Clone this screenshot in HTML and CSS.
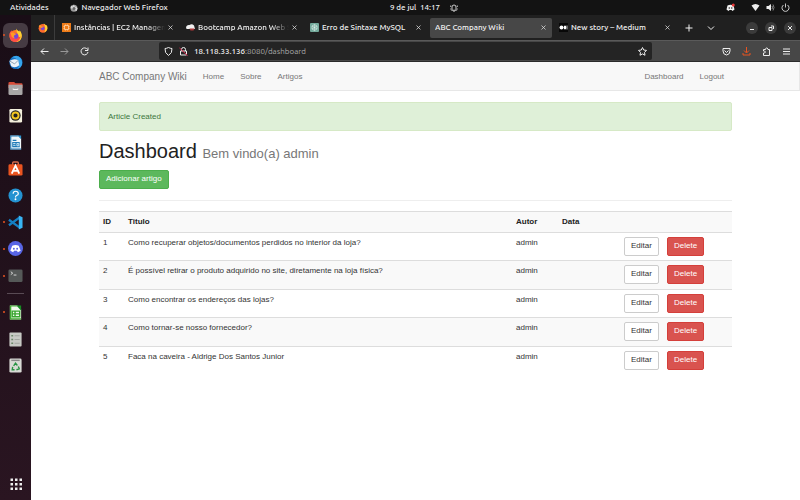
FILE: index.html
```html
<!DOCTYPE html>
<html lang="pt-BR">
<head>
<meta charset="utf-8">
<meta name="viewport" content="width=device-width, initial-scale=1">
<title>ABC Company Wiki</title>
<link rel="stylesheet" href="styles.css">
</head>
<body>
<header class="topbar">
  <div class="top-left">
    <button class="plain" type="button">Atividades</button>
    <button class="plain app-name" type="button">
      <svg class="i8" viewBox="0 0 16 16"><circle cx="8" cy="8.500" r="7" fill="#999"/><path d="M1 8 2 3l3 2 3-4 1 4 4 1 2 3-2 5z" fill="#d8d8d8"/><circle cx="8" cy="9" r="3" fill="#666"/></svg>
      Navegador Web Firefox
    </button>
  </div>
  <button class="plain clock" type="button">9 de jul&nbsp; 14:17
    <svg class="i8 bell" viewBox="0 0 16 16" fill="none" stroke="#ddd" stroke-width="1.800"><path d="M4 11V6a4 4 0 0 1 8 0v5l1 1.500H3zM6.500 14.500h3M1.500 3v3M14.500 3v3M1.500 9v2M14.500 9v2"/></svg>
  </button>
  <div class="top-right">
    <svg class="i9 discord-tray" viewBox="0 0 18 18"><path d="M3 5q6-3 12 0l2 8-4 3-2-2H7l-2 2-4-3z" fill="#f2f2f2"/><circle cx="6.500" cy="10" r="1.500" fill="#222"/><circle cx="11.500" cy="10" r="1.500" fill="#222"/><circle cx="14.500" cy="4" r="3" fill="#ed3a3a"/></svg>
    <svg class="i9" viewBox="0 0 18 18"><path d="M1 5q8-6 16 0L9 16z" fill="#eee"/></svg>
    <svg class="i9" viewBox="0 0 18 18"><path d="M1 6h4l5-4v14l-5-4H1z" fill="#eee"/><path d="M12 6q2 3 0 6M14 3q4 6 0 12" fill="none" stroke="#aaa" stroke-width="1.500"/></svg>
    <svg class="i9" viewBox="0 0 18 18" fill="none" stroke="#ddd" stroke-width="1.800"><path d="M5 4a7 7 0 1 0 8 0M9 1v8"/></svg>
  </div>
</header>
<div class="desktop">
  <nav class="dock" aria-label="Dock">
    <ul class="dock-list">
      <li class="running"><span class="tile"><svg viewBox="0 0 32 32"><circle cx="16" cy="17" r="13" fill="#ff7a24"/><path d="M17 1q3 5 7 7l1-3q6 8 4 15-3 9-12 10 9-7 5-15-3-4-5-14" fill="#ffd232"/><path d="M3 12 7 5l3 5q6-1 8 2l-4 3q8 7 13 3-3 11-11 12Q2 29 3 12" fill="#ff4d47"/><circle cx="16" cy="17" r="6" fill="#7647d8"/><path d="M5 10q5-2 9 1l4 2-5 3q-2 4 3 6-8 0-9-6z" fill="#ff9b24"/></svg></span></li>
      <li><svg viewBox="0 0 32 32"><circle cx="17" cy="16" r="14" fill="#1671c4"/><path d="M8 5Q20-3 28 8q7 17-9 22 9-10 2-19-5-6-13-6" fill="#36a5ed"/><path d="M3 13q10-7 19-2l2 11q-8 7-17 2z" fill="#edf3f7"/><path d="m4 13 10 6 8-8" fill="none" stroke="#899eae" stroke-width="2"/></svg></li>
      <li><svg viewBox="0 0 32 32"><path d="M1 4q0-2 2-2h10l3 3h13q2 0 2 3v7H1z" fill="#d74c38"/><path d="M1 8h30v19q0 3-3 3H4q-3 0-3-3z" fill="#a9a7a7"/><path d="M11 16v2h10v-2" fill="none" stroke="#fff" stroke-width="2"/></svg></li>
      <li><svg viewBox="0 0 32 32"><rect x="3" y="2" width="27" height="29" rx="3" fill="#f3efdc"/><circle cx="16" cy="16" r="11" fill="#242424"/><circle cx="16" cy="16" r="6.500" fill="none" stroke="#f4c720" stroke-width="4"/><circle cx="16" cy="16" r="3" fill="#222"/></svg></li>
      <li><svg viewBox="0 0 32 32"><path d="M5 1h17l6 7v23H5z" fill="#f0f7fa"/><path d="M20 1h8v8z" fill="#2e94cd"/><path d="M5 1h16v2H7v26h21v2H5zM10 10h8v3h-8zM9 15h16v11H9z" fill="#1b78b7"/><path d="M11 18h5m-5 4h5m3-4h4v5h-4z" stroke="#d5edf8" stroke-width="2" fill="none"/></svg></li>
      <li><svg viewBox="0 0 32 32"><path d="M10 9V4q0-2 2-2h8q2 0 2 2v5" fill="none" stroke="#d86b49" stroke-width="3"/><rect x="1" y="7" width="30" height="24" rx="3" fill="#e95420"/><path d="m8 27 8-17 8 17M9 21h14" fill="none" stroke="#fff" stroke-width="4"/></svg></li>
      <li><svg viewBox="0 0 32 32"><circle cx="16" cy="16" r="15" fill="#2493d1"/><path d="M11 12q0-5 5-5 6 0 6 5 0 3-4 4-2 1-2 4" fill="none" stroke="#fff" stroke-width="2.500"/><circle cx="16" cy="24" r="2" fill="#fff"/></svg></li>
      <li class="running"><svg viewBox="0 0 32 32"><path d="M25 5 2 22M25 27 2 10" fill="none" stroke="#147fc3" stroke-width="5"/><path d="m23 1 8 4v22l-8 4z" fill="#38b5f4"/></svg></li>
      <li class="running"><svg viewBox="0 0 32 32"><circle cx="16" cy="16" r="16" fill="#5865e5"/><path d="M9 10q7-3 14 0l4 11-6 3-2-3h-6l-2 3-6-3z" fill="#fff"/><circle cx="12.500" cy="16.500" r="2" fill="#5865e5"/><circle cx="19.500" cy="16.500" r="2" fill="#5865e5"/></svg></li>
      <li class="running"><svg viewBox="0 0 32 32"><rect x="1" y="3" width="30" height="27" rx="3" fill="#555958"/><path d="m6 8 4 3-4 3m6 1h6" fill="none" stroke="#ddd" stroke-width="2"/></svg></li>
    </ul>
    <hr class="dock-rule">
    <ul class="dock-list dock-short">
      <li class="running"><svg viewBox="0 0 32 32"><path d="M4 1h16l8 9v21H4z" fill="#f1faec"/><path d="M18 1h10v11z" fill="#168c22"/><path d="M4 1h15v2H7v25h21v3H4z" fill="#42ad32"/><path d="M9 13h16v12H9zM9 19h16M15 13v12" fill="none" stroke="#37a52e" stroke-width="3"/></svg></li>
      <li><svg viewBox="0 0 32 32"><rect x="3" y="1" width="26" height="30" rx="2" fill="#c7c9c4"/><path d="M7 8h4m-4 8h4m-4 8h4" stroke="#6c8769" stroke-width="3"/><path d="M14 8h11m-11 8h11m-11 8h11" stroke="#a0a29e" stroke-width="2"/></svg></li>
      <li><svg viewBox="0 0 32 32"><rect x="3" y="1" width="26" height="30" rx="3" fill="#d8dad5"/><path d="M7 5h18" stroke="#888" stroke-width="3"/><path d="m12 17 4-6 4 5m2 2 2 5-6 2m-4 0H9l1-6" fill="none" stroke="#269342" stroke-width="3"/></svg></li>
    </ul>
    <button class="plain apps" type="button" aria-label="Aplicativos"><svg viewBox="0 0 24 24" fill="#eee"><path d="M1 1h5v5H1zm9 0h5v5h-5zm9 0h5v5h-5zM1 10h5v5H1zm9 0h5v5h-5zm9 0h5v5h-5zM1 19h5v5H1zm9 0h5v5h-5zm9 0h5v5h-5z"/></svg></button>
  </nav>
  <section class="browser">
    <div class="tabbar">
      <div class="pinned"><svg class="i10" viewBox="0 0 32 32"><circle cx="16" cy="17" r="14" fill="#ff6a2b"/><path d="M18 1q4 5 11 8 4 15-9 21 7-13-2-29" fill="#ffd232"/><circle cx="15" cy="17" r="6" fill="#7647d8"/><path d="M2 11 7 5l3 5 8 2-6 4z" fill="#ff9b24"/></svg></div>
      <div class="tab"><svg class="i9" viewBox="0 0 18 18"><path d="M0 0h18v18H0z" fill="#ed7b18"/><path d="M5 5h8v8H5zM3 7h2m8 0h2M3 11h2m8 0h2M7 3v2m4-2v2m-4 8v2m4-2v2" fill="none" stroke="#ffe3c1" stroke-width="1.300"/></svg><span class="tab-title fade">Instâncias | EC2 Management</span><button class="plain close" type="button" aria-label="Fechar aba"><svg viewBox="0 0 10 10"><path d="m1 1 8 8m0-8-8 8"/></svg></button></div>
      <div class="tab"><svg class="i9" viewBox="0 0 18 18"><path d="M0 8q2-5 7-4 5-3 9 1l2 7H1z" fill="#f1f1f1"/><path d="M7 11h10l-2 4H9z" fill="#ae3638"/></svg><span class="tab-title fade">Bootcamp Amazon Web Services</span><button class="plain close" type="button" aria-label="Fechar aba"><svg viewBox="0 0 10 10"><path d="m1 1 8 8m0-8-8 8"/></svg></button></div>
      <div class="tab"><svg class="i9" viewBox="0 0 18 18"><rect width="18" height="18" rx="2" fill="#74aa9c"/><path d="m9 3 5 3v6l-5 3-5-3V6zM4 6l10 6M14 6 4 12M9 3v12" fill="none" stroke="#e1f0eb" stroke-width="1.200"/></svg><span class="tab-title">Erro de Sintaxe MySQL</span><button class="plain close" type="button" aria-label="Fechar aba"><svg viewBox="0 0 10 10"><path d="m1 1 8 8m0-8-8 8"/></svg></button></div>
      <div class="tab active"><span class="tab-title">ABC Company Wiki</span><button class="plain close" type="button" aria-label="Fechar aba"><svg viewBox="0 0 10 10"><path d="m1 1 8 8m0-8-8 8"/></svg></button></div>
      <div class="tab"><svg class="i9" viewBox="0 0 18 18"><path d="M0 0h18v18H0z" fill="#080808"/><circle cx="5" cy="9" r="4" fill="#fff"/><ellipse cx="12" cy="9" rx="2.500" ry="4" fill="#fff"/><path d="M16 5v8" stroke="#fff" stroke-width="1.500"/></svg><span class="tab-title">New story – Medium</span><button class="plain close" type="button" aria-label="Fechar aba"><svg viewBox="0 0 10 10"><path d="m1 1 8 8m0-8-8 8"/></svg></button></div>
      <div class="tab-tools">
        <button class="plain" type="button" aria-label="Nova aba"><svg class="i8 line" viewBox="0 0 16 16"><path d="M8 1v14M1 8h14"/></svg></button>
        <button class="plain" type="button" aria-label="Listar abas"><svg class="i8 line" viewBox="0 0 16 16"><path d="m2 5 6 6 6-6"/></svg></button>
      </div>
      <div class="window-tools">
        <button class="round" type="button" aria-label="Minimizar"><svg viewBox="0 0 12 12"><path d="M4 7.500h4"/></svg></button>
        <button class="round" type="button" aria-label="Restaurar"><svg viewBox="0 0 12 12"><path d="M4 5.500h3v3H4zM6 4h2.500v3"/></svg></button>
        <button class="round" type="button" aria-label="Fechar"><svg viewBox="0 0 12 12"><path d="m4 4 4 4m0-4L4 8"/></svg></button>
      </div>
    </div>
    <div class="toolbar">
      <div class="history">
        <button class="plain" type="button" aria-label="Voltar"><svg class="i9 line" viewBox="0 0 18 18"><path d="M17 9H2m6-6L2 9l6 6"/></svg></button>
        <button class="plain dim" type="button" aria-label="Avançar"><svg class="i9 line" viewBox="0 0 18 18"><path d="M1 9h15m-6-6 6 6-6 6"/></svg></button>
        <button class="plain" type="button" aria-label="Recarregar"><svg class="i9 line" viewBox="0 0 18 18"><path d="M15 5a7 7 0 1 0 1 5M16 1v6h-6"/></svg></button>
      </div>
      <div class="address">
        <svg class="i9 line" viewBox="0 0 18 18"><path d="M9 1q4 2 7 2 1 9-7 14Q1 12 2 3q3 0 7-2z"/></svg>
        <svg class="i9 line" viewBox="0 0 18 18"><path d="M3 8h12v8H3zM5 8V5q0-4 4-4t4 4v3"/><path d="m1 2 16 15" stroke="#e22850"/></svg>
        <span class="url"><b>18.118.33.136</b>:8080/dashboard</span>
        <button class="plain" type="button" aria-label="Favoritar"><svg class="i9 line" viewBox="0 0 18 18"><path d="m9 1 2.400 5 5.600.800-4 4 1 5.700-5-2.700-5 2.700 1-5.700-4-4L6.600 6z"/></svg></button>
      </div>
      <div class="extras">
        <button class="plain" type="button" aria-label="Pocket"><svg class="i9 line" viewBox="0 0 18 18"><path d="M2 3h14v5q0 7-7 8-7-1-7-8zM5 7l4 4 4-4"/></svg></button>
        <button class="plain download" type="button" aria-label="Downloads"><svg class="i9 line" viewBox="0 0 18 18"><path d="M9 0v11M4 7l5 5 5-5M2 12v4h14v-4"/></svg></button>
        <button class="plain" type="button" aria-label="Extensões"><svg class="i9 line" viewBox="0 0 18 18"><path d="M3 17v-5h2q4-2 0-4H3V5h4V4q2-5 5 0v1h3v12z"/></svg></button>
        <button class="plain" type="button" aria-label="Menu"><svg class="i9 line" viewBox="0 0 18 18"><path d="M2 4h14M2 9h14M2 14h14"/></svg></button>
      </div>
    </div>
    <div class="page">
      <nav class="navbar">
        <div class="container nav-inner">
          <a class="brand" href="#">ABC Company Wiki</a>
          <a href="#">Home</a><a href="#">Sobre</a><a href="#">Artigos</a>
          <div class="nav-right"><a href="#">Dashboard</a><a href="#">Logout</a></div>
        </div>
      </nav>
      <main class="container">
        <div class="alert" role="status">Article Created</div>
        <h1>Dashboard <small>Bem vindo(a) admin</small></h1>
        <a class="btn success" href="#">Adicionar artigo</a>
        <hr class="rule">
        <table>
          <colgroup><col class="c-id"><col><col class="c-author"><col class="c-date"><col class="c-edit"><col class="c-delete"></colgroup>
          <thead><tr><th>ID</th><th>Titulo</th><th>Autor</th><th>Data</th><th></th><th></th></tr></thead>
          <tbody>
            <tr><td>1</td><td>Como recuperar objetos/documentos perdidos no interior da loja?</td><td>admin</td><td></td><td><a class="btn" href="#">Editar</a></td><td><button class="btn danger" type="button">Delete</button></td></tr>
            <tr><td>2</td><td>É possível retirar o produto adquirido no site, diretamente na loja física?</td><td>admin</td><td></td><td><a class="btn" href="#">Editar</a></td><td><button class="btn danger" type="button">Delete</button></td></tr>
            <tr><td>3</td><td>Como encontrar os endereços das lojas?</td><td>admin</td><td></td><td><a class="btn" href="#">Editar</a></td><td><button class="btn danger" type="button">Delete</button></td></tr>
            <tr><td>4</td><td>Como tornar-se nosso fornecedor?</td><td>admin</td><td></td><td><a class="btn" href="#">Editar</a></td><td><button class="btn danger" type="button">Delete</button></td></tr>
            <tr><td>5</td><td>Faca na caveira - Aldrige Dos Santos Junior</td><td>admin</td><td></td><td><a class="btn" href="#">Editar</a></td><td><button class="btn danger" type="button">Delete</button></td></tr>
          </tbody>
        </table>
      </main>
    </div>
  </section>
</div>
</body>
</html>
```
FILE: styles.css
```css
* { box-sizing: border-box; }
body {
  margin: 0;
  min-height: 100vh;
  display: flex;
  flex-direction: column;
  background: #fff;
  color: #333;
  font: 8px/11px "Liberation Sans", Arial, sans-serif;
}
svg { display: block; flex: none; }
ul { list-style: none; margin: 0; padding: 0; }
a { color: inherit; text-decoration: none; }
.plain {
  display: flex;
  align-items: center;
  padding: 0;
  border: 0;
  background: none;
  color: inherit;
  font: inherit;
}
.i8 { width: 8px; height: 8px; }
.i9 { width: 9px; height: 9px; }
.i10 { width: 10px; height: 10px; }
.line { fill: none; stroke: currentColor; stroke-width: 2; }

.topbar {
  display: grid;
  grid-template-columns: 1fr auto 1fr;
  align-items: center;
  height: 15px;
  padding: 0 10px;
  background: #131313;
  color: #eee;
  font-family: Ubuntu, "Noto Sans", sans-serif;
  font-weight: 500;
}
.top-left { display: flex; gap: 21px; }
.app-name { gap: 4px; }
.clock { margin-left: 48px; }
.bell { margin-left: 10px; }
.top-right { display: flex; justify-content: flex-end; gap: 6px; }
.discord-tray { margin-right: 10px; }

.desktop { flex: 1; display: flex; }
.dock {
  flex: none;
  display: flex;
  flex-direction: column;
  width: 31px;
  padding: 7px 0 10px;
  background: linear-gradient(#190d16, #2a1521);
}
.dock-list { display: flex; flex-direction: column; height: 267px; }
.dock-short { height: 80px; }
.dock-list li {
  flex: 1;
  position: relative;
  display: flex;
  align-items: center;
  justify-content: center;
}
.dock-list svg { width: 15px; height: 15px; }
.running::before {
  content: "";
  position: absolute;
  left: 3px;
  width: 2px;
  height: 2px;
  border-radius: 1px;
  background: #e95420;
}
.tile {
  display: flex;
  align-items: center;
  justify-content: center;
  width: 25px;
  height: 25px;
  border-radius: 6px;
  background: #463b43;
}
.dock-rule { width: 17px; margin: 4px auto 5px; border: 0; border-top: 1px solid #594b54; }
.apps { margin: auto auto 0; }
.apps svg { width: 12px; height: 12px; }

.browser { flex: 1; min-width: 0; display: flex; flex-direction: column; }
.tabbar {
  display: flex;
  align-items: center;
  height: 25px;
  padding-right: 4px;
  background: #202020;
  color: #f2f2f2;
  font-family: Ubuntu, "Noto Sans", sans-serif;
  font-weight: 500;
}
.pinned {
  display: flex;
  align-items: center;
  justify-content: center;
  width: 24px;
  height: 25px;
  border-right: 1px solid #3c3c3c;
}
.tab {
  flex: 0 1 124px;
  min-width: 0;
  display: flex;
  align-items: center;
  gap: 3px;
  height: 20px;
  padding: 0 6px 0 7px;
}
.tab-title { flex: 1; overflow: hidden; white-space: nowrap; }
.fade { -webkit-mask-image: linear-gradient(90deg, #000 80%, transparent); mask-image: linear-gradient(90deg, #000 80%, transparent); }
.close svg { width: 5px; height: 5px; fill: none; stroke: #ddd; stroke-width: 1.5; }
.active {
  margin-left: 3px;
  padding-left: 5px;
  flex-basis: 122px;
  border-radius: 2px;
  background: #474747;
}
.tab-tools { display: flex; gap: 14px; margin-left: 9px; }
.window-tools { display: flex; gap: 7px; margin-left: auto; }
.round { width: 12px; height: 12px; padding: 0; border: 0; border-radius: 50%; background: #3b3b3b; }
.round svg { width: 12px; height: 12px; fill: none; stroke: #eee; stroke-width: 1; }

.toolbar {
  display: flex;
  align-items: center;
  height: 22px;
  padding: 0 9px;
  border-top: 1px solid #5a5a5a;
  border-bottom: 1px solid #2b2b2b;
  background: #474747;
  color: #eee;
}
.history { display: flex; gap: 11px; margin-right: 70px; }
.dim { color: #999; }
.address {
  flex: 1;
  display: flex;
  align-items: center;
  gap: 6px;
  height: 18px;
  padding: 0 5px;
  border-radius: 2px;
  background: #242424;
}
.url { flex: 1; color: #aaa; font-family: Ubuntu, "Noto Sans", sans-serif; }
.url b { color: #f2f2f2; font-weight: 500; }
.extras { display: flex; gap: 11px; margin-left: 70px; }
.download { color: #e95420; }

.page { flex: 1; background: #fff; }
.container { width: 83%; max-width: 633px; margin: 0 auto 0 68px; }
.navbar {
  border: 1px solid #e7e7e7;
  border-top: 0;
  border-left: 0;
  background: #f8f8f8;
}
.nav-inner { display: flex; align-items: center; gap: 16px; height: 28px; color: #777; }
.brand { font-size: 10px; }
.nav-right { display: flex; gap: 16px; margin-left: auto; padding-right: 8px; }
.alert {
  margin-top: 11px;
  padding: 8px;
  border: 1px solid #d6e9c6;
  border-radius: 2px;
  background: #dff0d8;
  color: #3c763d;
}
h1 { margin: 10px 0 9px; color: #222; font-size: 20px; font-weight: 500; line-height: 20px; }
h1 small { color: #777; font-size: 13px; font-weight: 400; line-height: 13px; }
.btn {
  display: block;
  width: max-content;
  padding: 2px 6px 4px;
  border: 1px solid #ccc;
  border-radius: 2px;
  background: #fff;
  color: #333;
  font: inherit;
}
.success { border-color: #4cae4c; background: #5cb85c; color: #fff; }
.danger { border-color: #d43f3a; background: #d9534f; color: #fff; }
.rule { margin: 11px 0 10px; border: 0; border-top: 1px solid #eee; }
table { width: 100%; border-collapse: collapse; table-layout: fixed; }
.c-id { width: 25px; }
.c-author { width: 46px; }
.c-date { width: 62px; }
.c-edit { width: 43px; }
.c-delete { width: 69px; }
th, td { padding: 4px; border-top: 1px solid #ddd; text-align: left; vertical-align: top; }
th { height: 21px; color: #222; }
thead tr, tbody tr:nth-child(even) { background: #f9f9f9; }
td { height: 28px; }
tbody tr:nth-child(even) td { height: 29px; }
```
